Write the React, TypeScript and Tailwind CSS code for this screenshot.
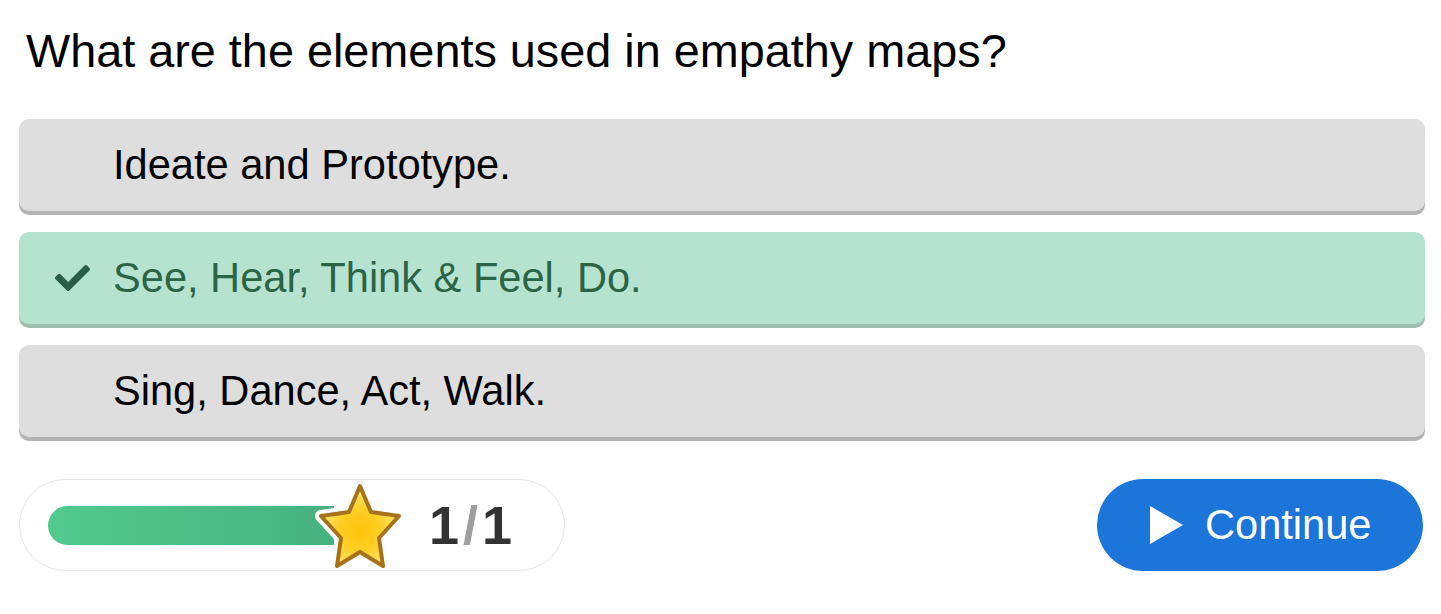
const options = [
  { text: 'Ideate and Prototype.', correct: false },
  { text: 'See, Hear, Think & Feel, Do.', correct: true },
  { text: 'Sing, Dance, Act, Walk.', correct: false },
];

function Check() {
  return (
    <svg viewBox="0 60 512 392" className="w-[35px] h-[28px]" fill="#2b5e46">
      <path d="M173.898 439.404l-166.4-166.4c-9.997-9.997-9.997-26.206 0-36.204l36.203-36.204c9.997-9.998 26.207-9.998 36.204 0L192 312.69 432.095 72.596c9.997-9.997 26.207-9.997 36.204 0l36.203 36.204c9.997 9.997 9.997 26.206 0 36.204l-294.4 294.401c-9.998 9.997-26.207 9.997-36.204-.001z" />
    </svg>
  );
}

function Star() {
  const pts = '45,4 56,30 84,34 64,56 68,84 45,70 22,84 26,56 6,34 34,30';
  return (
    <svg viewBox="0 0 90 88" className="w-[90px] h-[88px]">
      <defs>
        <radialGradient id="starFill" cx="50%" cy="55%" r="55%">
          <stop offset="0%" stopColor="#ffc30a" />
          <stop offset="45%" stopColor="#ffcd22" />
          <stop offset="100%" stopColor="#ffe97a" />
        </radialGradient>
      </defs>
      <polygon points={pts} fill="#fff" stroke="#fff" strokeWidth="12" strokeLinejoin="round" />
      <polygon points={pts} fill="url(#starFill)" stroke="#a8711b" strokeWidth="4" strokeLinejoin="round" />
    </svg>
  );
}

export default function App() {
  return (
    <div className="min-h-screen bg-white px-[19px] font-['Liberation_Sans',Arial,sans-serif]">
      <h1 className="pt-[25px] pl-[7px] text-[46.8px] leading-[52px] text-black font-normal">
        What are the elements used in empathy maps?
      </h1>

      <div className="mt-[42px] flex flex-col gap-[21px]">
        {options.map((o, i) => (
          <div
            key={i}
            className={`flex items-center h-[92px] w-[1406px] rounded-[10px] pl-[36px] ${
              o.correct
                ? 'bg-[#b6e3d0] shadow-[0_4px_0_#9fbfae] text-[#2c6448]'
                : 'bg-[#dedede] shadow-[0_4px_0_#b3b3b3] text-black'
            }`}
          >
            <div className="w-[36px] flex items-center">{o.correct && <Check />}</div>
            <span className="ml-[22px] text-[41.6px] leading-none">{o.text}</span>
          </div>
        ))}
      </div>

      <div className="mt-[42px] flex items-center justify-between w-[1404px]">
        <div className="flex items-center h-[92px] w-[546px] rounded-full border border-[#e6e6e6] pl-[28px]">
          <div className="h-[39px] w-[286px] rounded-l-full bg-gradient-to-r from-[#52ca8e] to-[#46b27f]" />
          <div className="-ml-[19px] mt-[2px]">
            <Star />
          </div>
          <div className="ml-[24px] text-[54px] font-bold leading-none text-[#333]">
            1<span className="text-[#9e9e9e] mx-[4px]">/</span>1
          </div>
        </div>

        <button className="flex items-center h-[92px] w-[326px] rounded-full bg-[#1c75d8] pl-[53px] text-white">
          <svg viewBox="0 0 33 38" className="w-[33px] h-[38px]" fill="#fff">
            <polygon points="0,0 33,19 0,38" />
          </svg>
          <span className="ml-[22px] text-[41.6px] leading-none">Continue</span>
        </button>
      </div>
    </div>
  );
}
